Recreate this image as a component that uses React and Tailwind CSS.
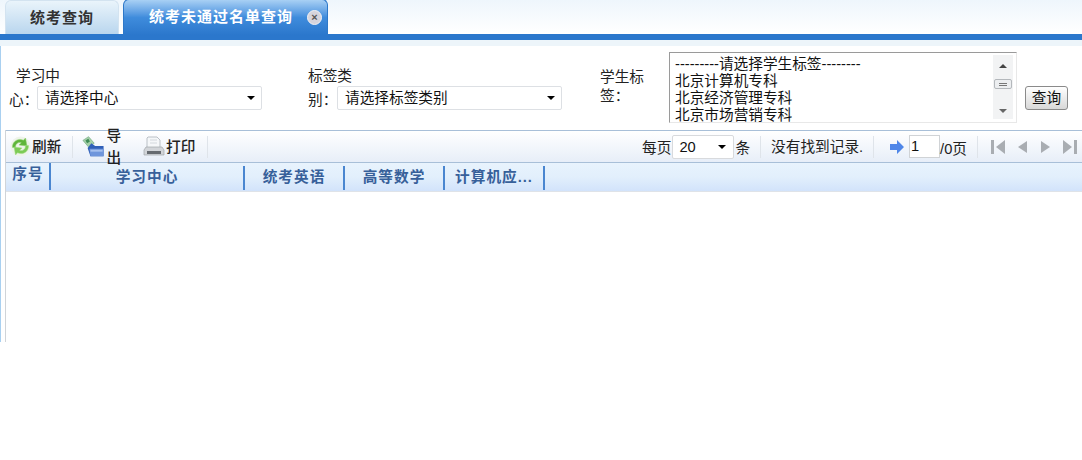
const font = { fontFamily: '"Liberation Sans", "Noto Sans CJK SC", sans-serif' };

function Caret() {
  return <span className="w-0 h-0 border-x-[4px] border-x-transparent border-t-[4px] border-t-black" />;
}

function FakeSelect({ className, text }) {
  return (
    <div className={`flex items-center justify-between bg-white border border-[#dde0e4] rounded-[2px] pl-[7px] pr-[6px] text-[14.67px] text-[#111] ${className}`}>
      <span>{text}</span>
      <Caret />
    </div>
  );
}

function Sep() {
  return <span className="w-px h-[22px] bg-[#dfe4ea] shrink-0" />;
}

function RefreshIcon() {
  return (
    <svg width="21" height="21" viewBox="0 0 21 21">
      <circle cx="10.5" cy="10.5" r="10" fill="#eef3ea" />
      <path d="M2.5 11.5C2 6 7.5 1.5 13.5 4.2L15.5 2l1.5 8-8-1 2.3-2.3C8 5.8 5.2 8 5.6 11.5z" fill="#5fb53a" stroke="#8fd06f" strokeWidth="0.5" />
      <path d="M18.5 9.5C19 15 13.5 19.5 7.5 16.8L5.5 19 4 11l8 1-2.3 2.3c3.3.9 6.1-1.3 5.7-4.8z" fill="#7ccb55" stroke="#a5dc88" strokeWidth="0.5" />
    </svg>
  );
}

function ExportIcon() {
  return (
    <svg width="24" height="23" viewBox="0 0 24 23">
      <path d="M1 5l6-4 6 7-6 4z" fill="#a5d0a8" stroke="#6fa87f" strokeWidth="0.7" />
      <rect x="4.5" y="4" width="3.5" height="3.5" fill="#3f8a55" transform="rotate(-30 6 6)" />
      <path d="M6 13l4-5 4 3h9v11H9z" fill="#2f5fb8" />
      <path d="M8 14h15v8H9z" fill="#6f96dc" />
      <path d="M9 15h13v2H9z" fill="#a6c0ee" />
    </svg>
  );
}

function PrintIcon() {
  return (
    <svg width="22" height="23" viewBox="0 0 22 23">
      <path d="M5 2h9l3 3v8H4V3z" fill="#f5f7f9" stroke="#b4bac1" strokeWidth="0.9" />
      <path d="M7 5h7M7 8h7" stroke="#d3d8dd" strokeWidth="1" />
      <path d="M3 12h16l2 3v5H1v-5z" fill="#d2d5d9" stroke="#a2a6ab" strokeWidth="0.7" />
      <rect x="4" y="16" width="14" height="3" fill="#666b70" />
    </svg>
  );
}

function PageNav() {
  const fill = "#a9adb2";
  return (
    <div className="flex items-center gap-[12px] ml-[13px]">
      <svg width="14" height="16" viewBox="0 0 14 16"><rect x="0" y="1" width="3" height="14" fill={fill} /><path d="M14 1v14L5 8z" fill={fill} /></svg>
      <svg width="10" height="16" viewBox="0 0 10 16"><path d="M10 2v12L1 8z" fill={fill} /></svg>
      <svg width="12" height="16" viewBox="0 0 12 16"><path d="M2 2v12l9-6z" fill={fill} /></svg>
      <svg width="14" height="16" viewBox="0 0 14 16"><path d="M0 1v14l9-7z" fill={fill} /><rect x="11" y="1" width="3" height="14" fill={fill} /></svg>
    </div>
  );
}

const columns = [
  { label: "序号", width: "w-[45px] h-[27px]", pad: "pl-[1px]" },
  { label: "学习中心", width: "w-[194px] h-[24px] mt-[3px]", pad: "" },
  { label: "统考英语", width: "w-[100px] h-[24px] mt-[3px]", pad: "" },
  { label: "高等数学", width: "w-[100px] h-[24px] mt-[3px]", pad: "" },
  { label: "计算机应...", width: "w-[100px] h-[24px] mt-[3px]", pad: "whitespace-nowrap" },
];

export default function App() {
  return (
    <div style={font} className="w-[1082px] h-[460px] bg-white overflow-hidden text-[14.67px] text-[#222]">
      {/* tabs */}
      <div className="h-[34px] flex items-end pl-[5px] gap-[4px] bg-gradient-to-b from-[#eef6fc] to-white">
        <div className="w-[114px] h-[34px] rounded-t-[6px] border border-b-0 border-[#d3e3f0] bg-gradient-to-b from-[#eaf4fb] to-[#b9d6ee] flex items-center justify-center pt-[2px] text-[15px] font-bold text-[#333] tracking-[1px]">
          统考查询
        </div>
        <div className="w-[205px] h-[36px] -mb-px rounded-t-[6px] border border-b-0 border-[#2d78c9] bg-gradient-to-b from-[#a8d0f4] via-[#3f8cdc] to-[#2b77cc] flex items-center pl-[25px] text-[15px] font-bold text-white tracking-[1px]">
          统考未通过名单查询
          <span className="ml-[14px] w-[15px] h-[15px] rounded-full bg-[#d6d4dc] border border-[#f2f2f4] flex items-center justify-center text-[#555] text-[11px] leading-none font-bold tracking-normal">×</span>
        </div>
      </div>
      <div className="h-[6px] bg-[#2b77cc]" />
      <div className="h-[6px] bg-[#edf5fa]" />

      <div className="h-[296px] border-l border-[#a9d0f0] pl-[4px]">
        {/* filter */}
        <div className="h-[84px] flex items-start text-[#222]">
          <div className="flex items-end w-[298px] pt-[18px] pl-[4px]">
            <div className="w-[28px] leading-[24px]">
              <div className="whitespace-nowrap pl-[7px]">学习中</div>
              <div className="whitespace-nowrap">心：</div>
            </div>
            <FakeSelect className="w-[225px] h-[24px] mb-[2px]" text="请选择中心" />
          </div>
          <div className="flex items-end w-[297px] pt-[18px] pl-[5px]">
            <div className="w-[29px] leading-[24px] whitespace-nowrap">
              <div>标签类</div>
              <div>别：</div>
            </div>
            <FakeSelect className="w-[225px] h-[24px] mb-[2px]" text="请选择标签类别" />
          </div>
          <div className="w-[69px] pt-[22px] leading-[19px]">
            <div>学生标</div>
            <div>签：</div>
          </div>
          <div className="w-[348px] h-[71px] mt-[6px] flex border border-[#9a9a9a] border-r-[#e8e8e8] border-b-[#e8e8e8] bg-white leading-[17px] text-[#111]">
            <div className="flex-1 pl-[5px] pt-[3px] whitespace-nowrap">
              <div>---------请选择学生标签--------</div>
              <div>北京计算机专科</div>
              <div>北京经济管理专科</div>
              <div>北京市场营销专科</div>
            </div>
            <div className="w-[20px] mt-[2px] mr-[3px] mb-[3px] bg-[#f2f3f4] flex flex-col items-center pt-[9px]">
              <span className="w-0 h-0 border-x-[4px] border-x-transparent border-b-[4px] border-b-[#444]" />
              <span className="mt-[11px] w-[18px] h-[10px] border border-[#b4b8bc] rounded-[2px] bg-[#eceef0] flex flex-col items-center justify-center gap-px">
                <span className="w-[8px] h-px bg-[#777]" />
                <span className="w-[8px] h-px bg-[#777]" />
              </span>
              <span className="mt-[20px] w-0 h-0 border-x-[4px] border-x-transparent border-t-[4px] border-t-[#666]" />
            </div>
          </div>
          <button className="ml-[8px] mt-[40px] w-[43px] h-[24px] border border-[#8a8a8a] rounded-[3px] bg-gradient-to-b from-white to-[#d8d8d8] text-[#111]">
            查询
          </button>
        </div>

        {/* grid */}
        <div className="h-[212px] border-l border-[#d0d4d8]">
          <div className="h-[33px] border-y border-[#a8bfd8] bg-gradient-to-b from-white to-[#e7eef8] flex items-center justify-between text-[#222]">
            <div className="flex items-center font-medium">
              <span className="flex items-center w-[66px] pl-[4px]"><RefreshIcon /><span className="ml-[1px]">刷新</span></span>
              <Sep />
              <span className="flex items-center w-[61px] pl-[9px]"><ExportIcon /><span className="ml-[2px]">导出</span></span>
              <span className="flex items-center w-[73px] pl-[9px]"><PrintIcon /><span className="ml-[1px]">打印</span></span>
              <Sep />
            </div>
            <div className="flex items-center pr-[5px]">
              <span className="mt-[3px]">每页</span>
              <div className="ml-px w-[62px] h-[24px] flex items-center justify-between border border-[#d8dadd] rounded-[2px] bg-white pl-[6px] pr-[7px] text-[#111]">
                <span>20</span>
                <Caret />
              </div>
              <span className="ml-[1px] mr-[10px] mt-[3px]">条</span>
              <Sep />
              <span className="mx-[10px]">没有找到记录.</span>
              <Sep />
              <svg className="ml-[15px]" width="16" height="14" viewBox="0 0 16 14"><path d="M1 4h7V0l7 7-7 7v-4H1z" fill="#4f86e8" /></svg>
              <div className="ml-[4px] w-[31px] h-[23px] border border-[#d0d3d6] bg-white pl-[1px] text-[#111] leading-[20px]">1</div>
              <span className="mr-[10px] mt-[5px]">/0页</span>
              <Sep />
              <PageNav />
            </div>
          </div>
          <div className="h-[29px] flex bg-gradient-to-b from-[#e8f3fd] via-[#e2effc] to-[#d2e3fb] border-b border-[#dfe3e8]">
            {columns.map((col) => (
              <div key={col.label} className={`${col.width} ${col.pad} border-r-2 border-[#4a86d0] text-center font-bold text-[#37609a] tracking-[1px] leading-[22px]`}>
                {col.label}
              </div>
            ))}
          </div>
        </div>
      </div>
    </div>
  );
}
